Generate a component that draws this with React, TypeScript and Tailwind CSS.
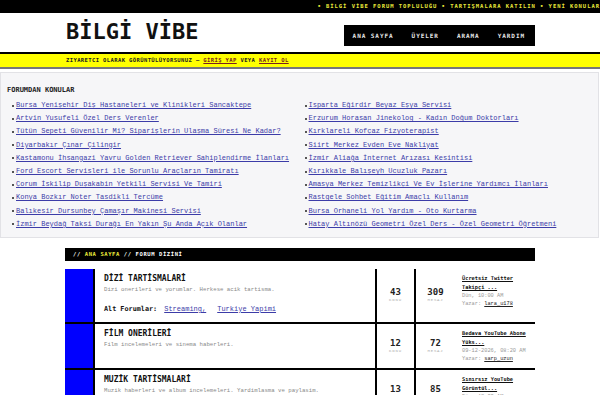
const topicsLeft = [
  "Bursa Yenişehir Diş Hastaneleri ve Klinikleri Sancaktepe",
  "Artvin Yusufeli Özel Ders Verenler",
  "Tütün Sepeti Güvenilir Mi? Siparişlerin Ulaşma Süresi Ne Kadar?",
  "Diyarbakır Çınar Çilingir",
  "Kastamonu İhsangazi Yavru Golden Retriever Sahiplendirme İlanları",
  "Ford Escort Servisleri ile Sorunlu Araçların Tamiratı",
  "Çorum İskilip Duşakabin Yetkili Servisi Ve Tamiri",
  "Konya Bozkır Noter Tasdikli Tercüme",
  "Balıkesir Dursunbey Çamaşır Makinesi Servisi",
  "İzmir Beydağ Taksi Durağı En Yakın Şu Anda Açık Olanlar",
];

const topicsRight = [
  "Isparta Eğirdir Beyaz Eşya Servisi",
  "Erzurum Horasan Jinekolog - Kadın Doğum Doktorları",
  "Kırklareli Kofçaz Fizyoterapist",
  "Siirt Merkez Evden Eve Nakliyat",
  "İzmir Aliağa İnternet Arızası Kesintisi",
  "Kırıkkale Balışeyh Ucuzluk Pazarı",
  "Amasya Merkez Temizlikçi Ve Ev İşlerine Yardımcı İlanları",
  "Rastgele Sohbet Eğitim Amaçlı Kullanım",
  "Bursa Orhaneli Yol Yardım - Oto Kurtarma",
  "Hatay Altınözü Geometri Özel Ders - Özel Geometri Öğretmeni",
];

type Forum = {
  title: string;
  desc: string;
  subs?: string[];
  topics: number;
  posts: number;
  last: string;
  date: string;
  user: string;
};

const forums: Forum[] = [
  {
    title: "DİZİ TARTİSMALARİ",
    desc: "Dizi onerileri ve yorumlar. Herkese acik tartisma.",
    subs: ["Streaming,", "Turkiye Yapimi"],
    topics: 43,
    posts: 309,
    last: "Ücretsiz Twitter Takipçi ...",
    date: "Dün, 10:00 AM",
    user: "lara_u178",
  },
  {
    title: "FİLM ONERİLERİ",
    desc: "Film incelemeleri ve sinema haberleri.",
    topics: 12,
    posts: 72,
    last: "Bedava YouTube Abone Yüks...",
    date: "09-12-2026, 08:20 AM",
    user: "sarp_uzun",
  },
  {
    title: "MUZİK TARTİSMALARİ",
    desc: "Muzik haberleri ve album incelemeleri. Yardimlasma ve paylasim.",
    topics: 13,
    posts: 85,
    last: "Sınırsız YouTube Görüntül...",
    date: "Dün, 12:33 AM",
    user: "deniz_k",
  },
];

const TopicList = ({ items }: { items: string[] }) => (
  <ul className="pl-[5px]">
    {items.map((t) => (
      <li key={t} className="flex items-center h-[13.2px] whitespace-nowrap">
        <span className="w-[2px] h-[2px] bg-[#555] mr-[2px] shrink-0" />
        <a className="text-[7px] leading-[13px] text-[#3c3ca8] underline">{t}</a>
      </li>
    ))}
  </ul>
);

export default function App() {
  return (
    <div className="min-h-[395px] bg-white font-['Liberation_Mono',monospace] text-[#111]">
      {/* ticker */}
      <div className="h-[13px] bg-black flex items-center justify-end overflow-hidden whitespace-nowrap">
        <span className="font-['DejaVu_Sans_Mono',monospace] font-bold text-[5.5px] tracking-[0.97px] text-[#e8e83a]">
          • BİLGİ VİBE FORUM TOPLULUĞU • TARTIŞMALARA KATILIN • YENİ KONULAR
        </span>
      </div>

      {/* header */}
      <header className="h-[41px] border-b-2 border-black">
        <div className="w-[470px] mx-auto flex justify-between items-start">
          <div className="mt-[8px] ml-[1px] font-['DejaVu_Sans_Mono',monospace] font-bold text-[22px] leading-[22px] text-[#111]">
            BİLGİ VİBE
          </div>
          <nav className="mt-[12px] h-[21px] bg-black flex items-center pl-[9px] pr-[10px] gap-[18px] font-['DejaVu_Sans_Mono',monospace] font-bold text-[6px] tracking-[0.94px] text-[#e8e8e8]">
            <a>ANA SAYFA</a>
            <a>ÜYELER</a>
            <a>ARAMA</a>
            <a>YARDIM</a>
          </nav>
        </div>
      </header>

      {/* guest banner */}
      <div className="h-[15px] bg-[#ffff00] border-b-2 border-[#777]">
        <div className="w-[470px] mx-auto pl-[1px] h-full flex items-center font-['DejaVu_Sans_Mono',monospace] font-bold text-[5.5px] tracking-[0.4px] text-[#222]">
          ZIYARETCI OLARAK GÖRÜNTÜLÜYORSUNUZ —&nbsp;
          <a className="underline text-[#7a1f1f]">GİRİŞ YAP</a>
          &nbsp;VEYA&nbsp;
          <a className="underline text-[#7a1f1f]">KAYIT OL</a>
        </div>
      </div>

      {/* forum topics */}
      <section className="mt-[3px] mr-[1px] border border-[#e2e2e6] bg-[#f6f6f8] px-[6px] pt-[13px] pb-[6px]">
        <h2 className="font-['DejaVu_Sans_Mono',monospace] font-bold text-[7px] leading-[8px] mb-[5px] text-[#222]">
          FORUMDAN KONULAR
        </h2>
        <div className="grid grid-cols-2">
          <TopicList items={topicsLeft} />
          <TopicList items={topicsRight} />
        </div>
      </section>

      {/* forum index */}
      <div className="w-[470px] mx-auto mt-[10px]">
        <div className="h-[13px] bg-black flex items-center pl-[8px] font-['DejaVu_Sans_Mono',monospace] font-bold text-[5.5px] tracking-[0.6px] text-white">
          //&nbsp;<span className="text-[#e8e83a]">ANA SAYFA</span>&nbsp;// FORUM DİZİNİ
        </div>

        <div className="mt-[8px]">
          {forums.map((f) => (
            <div key={f.title} className="flex border-b-2 border-black">
              <div className="w-[30px] shrink-0 bg-[#0000ff] border-r-2 border-black" />
              <div className="w-[280px] shrink-0 pl-[9px] pt-[5px] pb-[8px]">
                <div className="font-['DejaVu_Sans_Mono',monospace] font-bold text-[8px] leading-[10px] text-[#111]">
                  {f.title}
                </div>
                <div className="mt-[2px] text-[5.7px] leading-[8px] text-[#888]">{f.desc}</div>
                {f.subs && (
                  <div className="mt-[11px] flex items-center text-[7px] leading-[9px]">
                    <span className="font-['DejaVu_Sans_Mono',monospace] font-bold text-[6.8px] mr-[7px]">
                      Alt Forumlar:
                    </span>
                    <a className="underline text-[#3c3ca8] mr-[11px]">{f.subs[0]}</a>
                    <a className="underline text-[#3c3ca8]">{f.subs[1]}</a>
                  </div>
                )}
              </div>
              <div className="w-[39px] shrink-0 border-l-2 border-black flex flex-col items-center justify-center">
                <div className="font-['DejaVu_Sans_Mono',monospace] font-bold text-[9px] leading-[10px] text-[#222]">
                  {f.topics}
                </div>
                <div className="text-[4px] leading-[6px] tracking-[0.8px] text-[#aaa]">KONU</div>
              </div>
              <div className="w-[41px] shrink-0 border-l-2 border-black flex flex-col items-center justify-center">
                <div className="font-['DejaVu_Sans_Mono',monospace] font-bold text-[9px] leading-[10px] text-[#222]">
                  {f.posts}
                </div>
                <div className="text-[4px] leading-[6px] tracking-[0.8px] text-[#aaa]">MESAJ</div>
              </div>
              <div className="flex-1 pl-[7px] pr-[4px] py-[5px] text-[5.3px] leading-[8px]">
                <a className="font-['DejaVu_Sans_Mono',monospace] font-bold underline text-[#111]">{f.last}</a>
                <div className="text-[#999]">{f.date}</div>
                <div className="text-[#999]">
                  Yazar: <a className="underline text-[#222]">{f.user}</a>
                </div>
              </div>
            </div>
          ))}
        </div>
      </div>
    </div>
  );
}
